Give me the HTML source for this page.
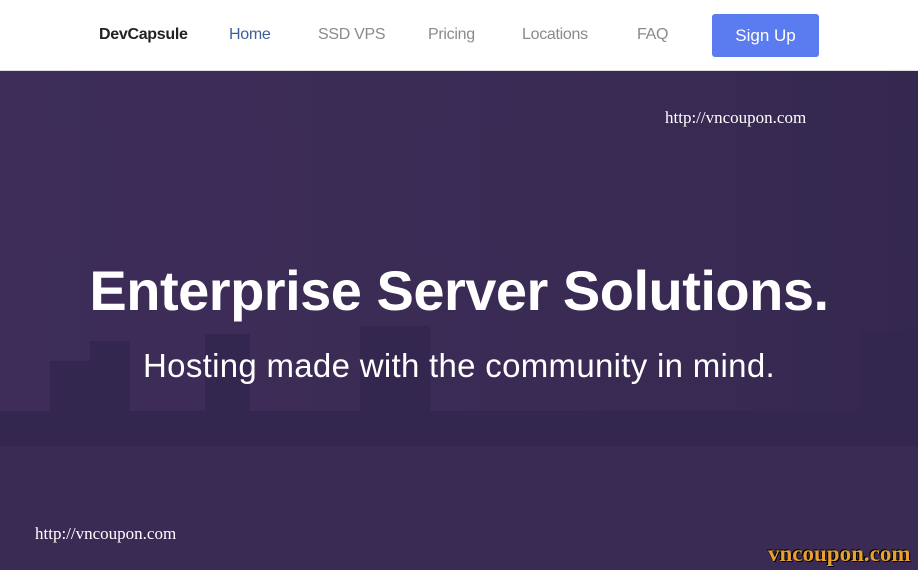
<!DOCTYPE html>
<html><head><style>
*{margin:0;padding:0;box-sizing:border-box}
body{width:918px;height:570px;overflow:hidden;font-family:"Liberation Sans",sans-serif;background:#3b2c57;position:relative}
.nav{position:absolute;top:0;left:0;width:918px;height:71px;background:#fff;border-bottom:1px solid #ddd}
.nav span{position:absolute;top:26px;font-size:16px;color:#8a8a8a;letter-spacing:-0.3px}
.btn{position:absolute;left:712px;top:14px;width:107px;height:43px;background:#5b7cf0;border-radius:3px;color:#fff;font-size:17px;text-align:center;line-height:43px}
.hero{position:absolute;top:71px;left:0;width:918px;height:499px;background:linear-gradient(90deg,#3d2d58,#3a2b55 60%,#35284f)}
.t{position:absolute;width:918px;text-align:center;color:#fff}
.w{position:absolute;font-family:"Liberation Serif",serif;color:#fff;font-size:17px}
.b{position:absolute;background:#34274f}
</style></head><body>
<div class="nav">
<span style="left:99px;color:#222;font-weight:bold">DevCapsule</span>
<span style="left:229px;color:#3f5f9a">Home</span>
<span style="left:318px">SSD VPS</span>
<span style="left:428px">Pricing</span>
<span style="left:522px">Locations</span>
<span style="left:637px">FAQ</span>
<div class="btn">Sign Up</div>
</div>
<div class="hero">
<div class="b" style="left:0;top:340px;width:918px;height:35px"></div>
<div class="b" style="left:50px;top:290px;width:45px;height:60px"></div>
<div class="b" style="left:90px;top:270px;width:40px;height:80px"></div>
<div class="b" style="left:205px;top:263px;width:45px;height:90px"></div>
<div class="b" style="left:360px;top:255px;width:70px;height:100px"></div>
<div class="b" style="left:860px;top:260px;width:58px;height:100px"></div>
<div class="b" style="left:0;top:375px;width:918px;height:124px;background:#3a2b55"></div>
</div>
<div class="t" style="top:258px;font-size:56px;font-weight:bold;letter-spacing:-0.5px">Enterprise Server Solutions.</div>
<div class="t" style="top:347px;font-size:33px;letter-spacing:0.3px">Hosting made with the community in mind.</div>
<div class="w" style="left:665px;top:108px">http://vncoupon.com</div>
<div class="w" style="left:35px;top:524px">http://vncoupon.com</div>
<div class="w" style="left:768px;top:541px;font-weight:bold;font-size:23px;color:#e8a030;text-shadow:1px 1px 0 #000,-1px -1px 0 #000">vncoupon.com</div>
</body></html>
